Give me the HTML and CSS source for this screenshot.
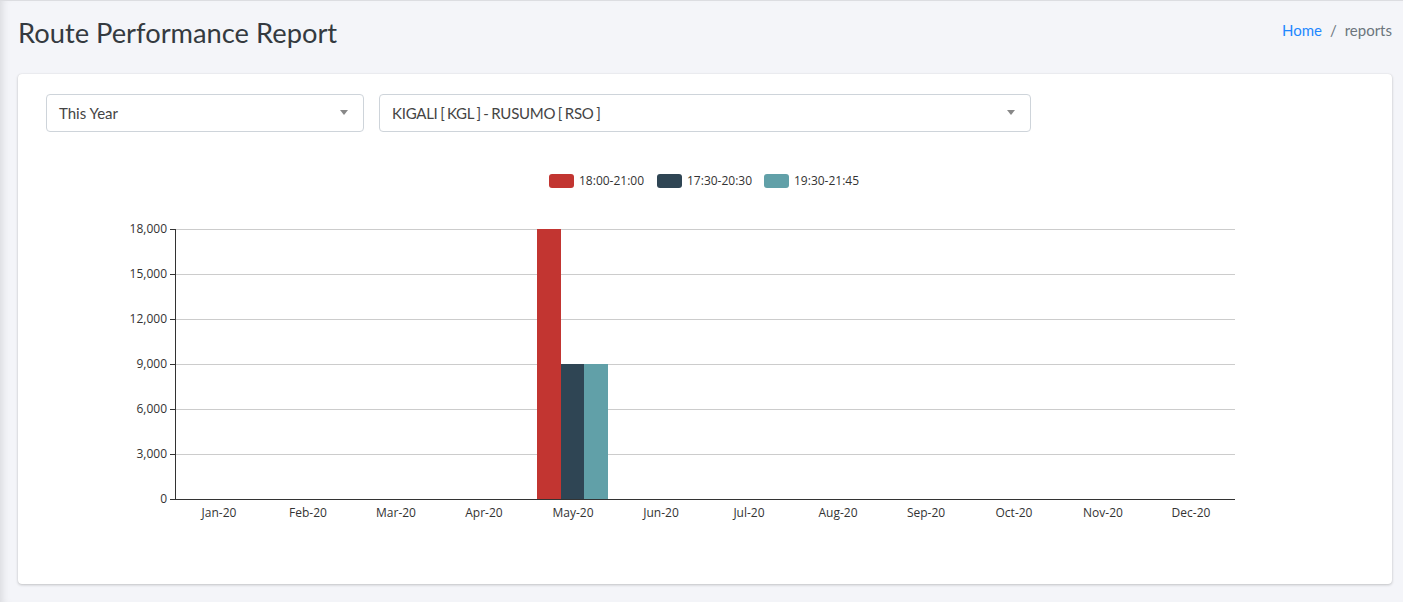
FILE: index.html
```html
<!DOCTYPE html>
<html>
<head>
<meta charset="utf-8">
<link rel="stylesheet" href="styles.css">
</head>
<body>
<div class="page">
  <div class="header">
    <h1 class="title">Route Performance Report</h1>
    <nav class="crumbs"><a class="crumb-link">Home</a><span class="sep">/</span><span class="crumb-current">reports</span></nav>
  </div>
  <div class="card">
    <div class="filters">
      <div class="select select-period"><span class="select-text">This Year</span><span class="caret"></span></div>
      <div class="select select-route"><span class="select-text">KIGALI [ KGL ] - RUSUMO [ RSO ]</span><span class="caret"></span></div>
    </div>
    <svg class="chart" width="1318" height="452" viewBox="0 0 1318 452">
      <g class="legend">
        <rect x="503" y="42" width="25" height="14" rx="3" fill="#c23531"/>
        <text x="533" y="53">18:00-21:00</text>
        <rect x="611" y="42" width="25" height="14" rx="3" fill="#2f4554"/>
        <text x="641" y="53">17:30-20:30</text>
        <rect x="718" y="42" width="25" height="14" rx="3" fill="#61a0a8"/>
        <text x="748" y="53">19:30-21:45</text>
      </g>
      <g class="grid">
        <line x1="129" y1="97.5" x2="1189" y2="97.5"/>
        <line x1="129" y1="142.5" x2="1189" y2="142.5"/>
        <line x1="129" y1="187.5" x2="1189" y2="187.5"/>
        <line x1="129" y1="232.5" x2="1189" y2="232.5"/>
        <line x1="129" y1="277.5" x2="1189" y2="277.5"/>
        <line x1="129" y1="322.5" x2="1189" y2="322.5"/>
      </g>
      <g class="bars">
        <rect x="491" y="97" width="24" height="270" fill="#c23531"/>
        <rect x="515" y="232" width="23" height="135" fill="#2f4554"/>
        <rect x="538" y="232" width="24" height="135" fill="#61a0a8"/>
      </g>
      <g class="axis">
        <line x1="129.5" y1="97" x2="129.5" y2="367.5"/>
        <line x1="129" y1="367.5" x2="1189" y2="367.5"/>
        <line x1="124" y1="97.5" x2="129" y2="97.5"/>
        <line x1="124" y1="142.5" x2="129" y2="142.5"/>
        <line x1="124" y1="187.5" x2="129" y2="187.5"/>
        <line x1="124" y1="232.5" x2="129" y2="232.5"/>
        <line x1="124" y1="277.5" x2="129" y2="277.5"/>
        <line x1="124" y1="322.5" x2="129" y2="322.5"/>
        <line x1="124" y1="367.5" x2="129" y2="367.5"/>
      </g>
      <g class="ylabels">
        <text x="121" y="101">18,000</text>
        <text x="121" y="146">15,000</text>
        <text x="121" y="191">12,000</text>
        <text x="121" y="236">9,000</text>
        <text x="121" y="281">6,000</text>
        <text x="121" y="326">3,000</text>
        <text x="121" y="371">0</text>
      </g>
      <g class="xlabels">
        <text x="173" y="385">Jan-20</text>
        <text x="262" y="385">Feb-20</text>
        <text x="350" y="385">Mar-20</text>
        <text x="438" y="385">Apr-20</text>
        <text x="527" y="385">May-20</text>
        <text x="615" y="385">Jun-20</text>
        <text x="703" y="385">Jul-20</text>
        <text x="792" y="385">Aug-20</text>
        <text x="880" y="385">Sep-20</text>
        <text x="968" y="385">Oct-20</text>
        <text x="1057" y="385">Nov-20</text>
        <text x="1145" y="385">Dec-20</text>
      </g>
    </svg>
  </div>
</div>
</body>
</html>
```
FILE: styles.css
```css
html, body {
  margin: 0;
  padding: 0;
  height: 100%;
}
body {
  background: #f4f5f9;
  font-family: "Lato", "Open Sans", sans-serif;
  color: #343a40;
  border-top: 1px solid #dcdde1;
  box-sizing: border-box;
  overflow: hidden;
}
.page {
  padding: 0 11px 0 18px;
  box-shadow: inset 8px 0 8px -6px rgba(0,0,0,0.12);
  min-height: 100%;
}
.header {
  display: flex;
  justify-content: space-between;
  align-items: flex-start;
  height: 73px;
}
.title {
  margin: 15px 0 0 0;
  font-size: 27.3px;
  font-weight: 400;
  color: #343a40;
  line-height: 34px;
}
.crumbs {
  margin-top: 19px;
  font-size: 15px;
  line-height: 20px;
  display: flex;
  align-items: center;
}
.crumb-link {
  color: #1e88ff;
}
.sep {
  color: #6c757d;
  padding: 0 8px;
}
.crumb-current {
  color: #6c757d;
}
.card {
  background: #fff;
  border-radius: 4px;
  box-shadow: 0 0 1px rgba(0,0,0,0.13), 0 1px 3px rgba(0,0,0,0.2);
  padding: 20px 28px 0 28px;
  height: 510px;
  box-sizing: border-box;
}
.filters {
  display: flex;
  gap: 15px;
}
.select {
  height: 38px;
  box-sizing: border-box;
  border: 1px solid #ced4da;
  border-radius: 4px;
  display: flex;
  align-items: center;
  justify-content: space-between;
  padding: 0 12px 1px 12px;
  font-size: 15px;
  color: #444;
}
.select-route .select-text {
  word-spacing: -1px;
  letter-spacing: -0.25px;
}
.select-period { width: 318px; }
.select-route { width: 652px; }
.caret {
  width: 0;
  height: 0;
  border-left: 4px solid transparent;
  border-right: 4px solid transparent;
  border-top: 5px solid #888;
  margin-right: 3px;
}
.chart {
  display: block;
  font-family: "Open Sans", "Noto Sans", sans-serif;
  font-size: 12px;
}
.legend text { fill: #333; }
.grid line { stroke: #ccc; stroke-width: 1; }
.axis line { stroke: #333; stroke-width: 1; }
.ylabels text { fill: #333; text-anchor: end; }
.xlabels text { fill: #333; text-anchor: middle; }
```
